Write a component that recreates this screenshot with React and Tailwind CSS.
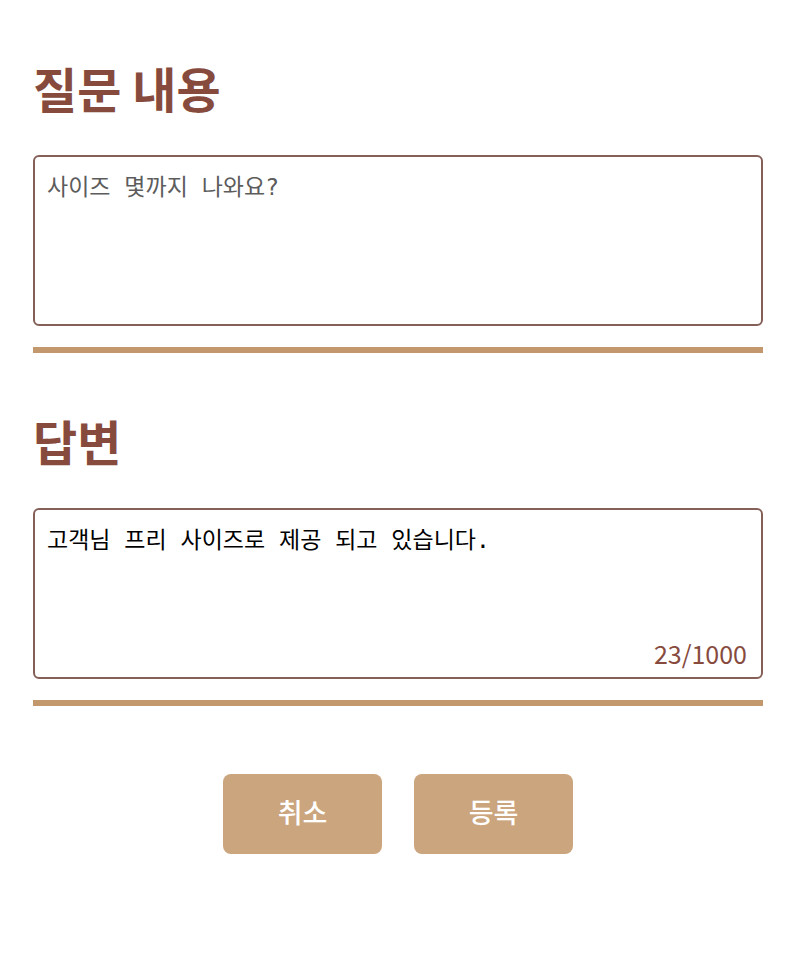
function Section({ id, title, children }) {
  return (
    <section className="border-b-6 border-[#c2986c] pb-[21px]">
      <h2 className="mb-8 text-[48px] leading-[72px] font-bold">
        <label htmlFor={id}>{title}</label>
      </h2>
      <div className="relative">{children}</div>
    </section>
  );
}

const box =
  "block h-[171px] w-full resize-none rounded-md border-2 border-[#846059] bg-white px-3 py-3 font-['DejaVu_Sans_Mono','Noto_Sans_CJK_KR',monospace] text-[23px] leading-9 outline-none";
const button =
  "h-20 w-[159px] rounded-lg bg-[#cba57e] pb-1 text-[27px] leading-9 font-medium text-white";

export default function App() {
  return (
    <main className="min-h-screen bg-white pt-[51px] pr-[25px] pb-12 pl-[33px] font-['Noto_Sans_CJK_KR',sans-serif] text-[#874b3e]">
      <form className="flex flex-col gap-[51px]" onSubmit={(e) => e.preventDefault()}>
        <Section id="question" title="질문 내용">
          <textarea id="question" className={`${box} text-[#5c5c5c]`} readOnly defaultValue="사이즈 몇까지 나와요?" />
        </Section>
        <Section id="answer" title="답변">
          <textarea id="answer" className={`${box} text-black`} maxLength={1000} defaultValue="고객님 프리 사이즈로 제공 되고 있습니다." />
          <span className="absolute right-4 bottom-2 text-[25px] leading-9">23/1000</span>
        </Section>
        <div className="mt-[17px] flex justify-center gap-8">
          <button type="button" className={button}>취소</button>
          <button type="submit" className={button}>등록</button>
        </div>
      </form>
    </main>
  );
}
